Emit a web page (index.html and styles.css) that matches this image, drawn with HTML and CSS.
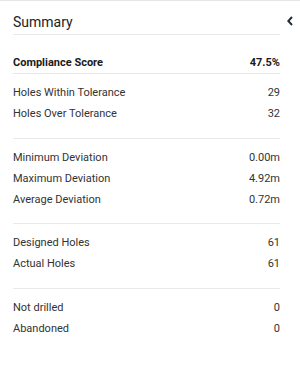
FILE: index.html
```html
<!DOCTYPE html>
<html>
<head>
<meta charset="utf-8">
<link rel="stylesheet" href="styles.css">
</head>
<body>
<div class="panel">
  <div class="content">
    <div class="header">Summary</div>
    <div class="row score"><span>Compliance Score</span><span>47.5%</span></div>
    <div class="section wide">
      <div class="row"><span>Holes Within Tolerance</span><span>29</span></div>
      <div class="row"><span>Holes Over Tolerance</span><span>32</span></div>
    </div>
    <div class="section">
      <div class="row"><span>Minimum Deviation</span><span>0.00m</span></div>
      <div class="row"><span>Maximum Deviation</span><span>4.92m</span></div>
      <div class="row"><span>Average Deviation</span><span>0.72m</span></div>
    </div>
    <div class="section wide">
      <div class="row"><span>Designed Holes</span><span>61</span></div>
      <div class="row"><span>Actual Holes</span><span>61</span></div>
    </div>
    <div class="section last">
      <div class="row"><span>Not drilled</span><span>0</span></div>
      <div class="row"><span>Abandoned</span><span>0</span></div>
    </div>
  </div>
  <button class="collapse" aria-label="Collapse">
    <svg width="6" height="10" viewBox="0 0 6 10"><path d="M5 1 L1.3 5 L5 9" fill="none" stroke="#1e2a36" stroke-width="1.9"/></svg>
  </button>
</div>
</body>
</html>
```
FILE: styles.css
```css
html, body {
  margin: 0;
  padding: 0;
  background: #fff;
}
body {
  font-family: Roboto, "Liberation Sans", sans-serif;
  color: #333;
}
.panel {
  display: flex;
  border-top: 1px solid #e6e6e6;
  width: 300px;
  height: 366px;
  box-sizing: border-box;
}
.content {
  width: 267px;
  margin-left: 13px;
}
.header {
  font-size: 14px;
  color: #222;
  line-height: 20px;
  padding: 11px 0 2px;
  border-bottom: 1px solid #e8e8e8;
}
.row {
  display: flex;
  justify-content: space-between;
  font-size: 11px;
  line-height: 21px;
  height: 21px;
}
.score {
  font-weight: 700;
  color: #1a1a1a;
  padding-top: 17px;
  border-bottom: 1px solid #e8e8e8;
}
.section {
  padding-top: 8px;
  padding-bottom: 13px;
  border-bottom: 1px solid #e8e8e8;
}
.section.wide {
  padding-bottom: 14px;
}
.section.last {
  border-bottom: none;
}
.collapse {
  border: none;
  background: none;
  padding: 0;
  margin: 15px 0 0 7px;
  width: 6px;
  height: 10px;
  display: flex;
}
```
